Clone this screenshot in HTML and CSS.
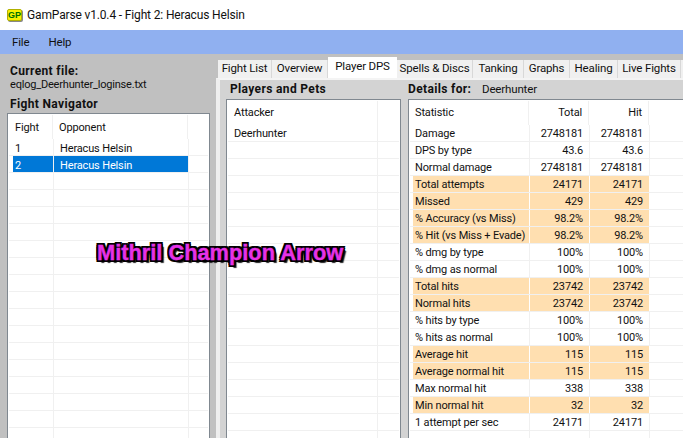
FILE: index.html
```html
<!DOCTYPE html>
<html lang="en">
<head>
<meta charset="utf-8">
<title>GamParse</title>
<link rel="stylesheet" href="styles.css">
</head>
<body>
<div class="titlebar">
  <span class="logo">GP</span>
  <span class="title">GamParse v1.0.4 - Fight 2: Heracus Helsin</span>
</div>
<nav class="menubar"><span>File</span><span>Help</span></nav>
<main class="main">
  <aside class="left">
    <div class="bold cf">Current file:</div>
    <div class="fname">eqlog_Deerhunter_loginse.txt</div>
    <div class="bold fn">Fight Navigator</div>
    <div class="list fights">
      <div class="head"><span class="c1">Fight</span><span class="c2">Opponent</span></div>
      <div class="row"><span class="c1">1</span><span class="c2">Heracus Helsin</span><span class="c3"></span></div>
      <div class="row sel"><span class="c1">2</span><span class="c2">Heracus Helsin</span><span class="c3"></span></div>
      <div class="row"><span class="c1"></span><span class="c2"></span><span class="c3"></span></div>
      <div class="row"><span class="c1"></span><span class="c2"></span><span class="c3"></span></div>
      <div class="row"><span class="c1"></span><span class="c2"></span><span class="c3"></span></div>
      <div class="row"><span class="c1"></span><span class="c2"></span><span class="c3"></span></div>
      <div class="row"><span class="c1"></span><span class="c2"></span><span class="c3"></span></div>
      <div class="row"><span class="c1"></span><span class="c2"></span><span class="c3"></span></div>
      <div class="row"><span class="c1"></span><span class="c2"></span><span class="c3"></span></div>
      <div class="row"><span class="c1"></span><span class="c2"></span><span class="c3"></span></div>
      <div class="row"><span class="c1"></span><span class="c2"></span><span class="c3"></span></div>
      <div class="row"><span class="c1"></span><span class="c2"></span><span class="c3"></span></div>
      <div class="row"><span class="c1"></span><span class="c2"></span><span class="c3"></span></div>
      <div class="row"><span class="c1"></span><span class="c2"></span><span class="c3"></span></div>
      <div class="row"><span class="c1"></span><span class="c2"></span><span class="c3"></span></div>
      <div class="row"><span class="c1"></span><span class="c2"></span><span class="c3"></span></div>
      <div class="row"><span class="c1"></span><span class="c2"></span><span class="c3"></span></div>
      <div class="row"><span class="c1"></span><span class="c2"></span><span class="c3"></span></div>
    </div>
  </aside>
  <section class="right">
    <div class="tabs">
      <span class="tab t1">Fight List</span>
      <span class="tab t2">Overview</span>
      <span class="tab active">Player DPS</span>
      <span class="tab t4">Spells &amp; Discs</span>
      <span class="tab t5">Tanking</span>
      <span class="tab t6">Graphs</span>
      <span class="tab t7">Healing</span>
      <span class="tab t8">Live Fights</span>
      <span class="tab t9"></span>
    </div>
    <div class="panel">
      <div class="players">
        <div class="bold ptitle">Players and Pets</div>
        <div class="list plist">
          <div class="head"><span class="p1">Attacker</span></div>
          <div class="row"><span class="p1">Deerhunter</span><span class="p2"></span></div>
          <div class="row"><span class="p1"></span><span class="p2"></span></div>
          <div class="row"><span class="p1"></span><span class="p2"></span></div>
          <div class="row"><span class="p1"></span><span class="p2"></span></div>
          <div class="row"><span class="p1"></span><span class="p2"></span></div>
          <div class="row"><span class="p1"></span><span class="p2"></span></div>
          <div class="row"><span class="p1"></span><span class="p2"></span></div>
          <div class="row"><span class="p1"></span><span class="p2"></span></div>
          <div class="row"><span class="p1"></span><span class="p2"></span></div>
          <div class="row"><span class="p1"></span><span class="p2"></span></div>
          <div class="row"><span class="p1"></span><span class="p2"></span></div>
          <div class="row"><span class="p1"></span><span class="p2"></span></div>
          <div class="row"><span class="p1"></span><span class="p2"></span></div>
          <div class="row"><span class="p1"></span><span class="p2"></span></div>
          <div class="row"><span class="p1"></span><span class="p2"></span></div>
          <div class="row"><span class="p1"></span><span class="p2"></span></div>
          <div class="row"><span class="p1"></span><span class="p2"></span></div>
          <div class="row"><span class="p1"></span><span class="p2"></span></div>
          <div class="row"><span class="p1"></span><span class="p2"></span></div>
        </div>
      </div>
      <div class="details">
        <div class="dtitle"><span class="bold dlabel">Details for:</span><span>Deerhunter</span></div>
        <div class="list stats">
          <div class="head"><span class="s1">Statistic</span><span class="s2">Total</span><span class="s2">Hit</span></div>
          <div class="row"><span class="s1">Damage</span><span class="s2">2748181</span><span class="s2">2748181</span></div>
          <div class="row"><span class="s1">DPS by type</span><span class="s2">43.6</span><span class="s2">43.6</span></div>
          <div class="row"><span class="s1">Normal damage</span><span class="s2">2748181</span><span class="s2">2748181</span></div>
          <div class="row hl"><span class="s1">Total attempts</span><span class="s2">24171</span><span class="s2">24171</span></div>
          <div class="row hl"><span class="s1">Missed</span><span class="s2">429</span><span class="s2">429</span></div>
          <div class="row hl"><span class="s1">% Accuracy (vs Miss)</span><span class="s2">98.2%</span><span class="s2">98.2%</span></div>
          <div class="row hl"><span class="s1">% Hit (vs Miss + Evade)</span><span class="s2">98.2%</span><span class="s2">98.2%</span></div>
          <div class="row"><span class="s1">% dmg by type</span><span class="s2">100%</span><span class="s2">100%</span></div>
          <div class="row"><span class="s1">% dmg as normal</span><span class="s2">100%</span><span class="s2">100%</span></div>
          <div class="row hl"><span class="s1">Total hits</span><span class="s2">23742</span><span class="s2">23742</span></div>
          <div class="row hl"><span class="s1">Normal hits</span><span class="s2">23742</span><span class="s2">23742</span></div>
          <div class="row"><span class="s1">% hits by type</span><span class="s2">100%</span><span class="s2">100%</span></div>
          <div class="row"><span class="s1">% hits as normal</span><span class="s2">100%</span><span class="s2">100%</span></div>
          <div class="row hl"><span class="s1">Average hit</span><span class="s2">115</span><span class="s2">115</span></div>
          <div class="row hl"><span class="s1">Average normal hit</span><span class="s2">115</span><span class="s2">115</span></div>
          <div class="row"><span class="s1">Max normal hit</span><span class="s2">338</span><span class="s2">338</span></div>
          <div class="row hl"><span class="s1">Min normal hit</span><span class="s2">32</span><span class="s2">32</span></div>
          <div class="row"><span class="s1">1 attempt per sec</span><span class="s2">24171</span><span class="s2">24171</span></div>
          <div class="row"><span class="s1"></span><span class="s2"></span><span class="s2"></span></div>
        </div>
      </div>
    </div>
  </section>
</main>
<div class="overlay">Mithril Champion Arrow</div>
</body>
</html>
```
FILE: styles.css
```css
* { box-sizing: border-box; }
html, body { margin: 0; height: 438px; overflow: hidden; }
body {
  position: relative;
  display: flex;
  flex-direction: column;
  width: 683px;
  background: #fff;
  color: #111;
  font: 11.5px/17px Roboto, sans-serif;
  letter-spacing: -0.15px;
}
.bold { font-weight: 700; font-size: 12px; letter-spacing: 0.35px; }

.titlebar { height: 30px; display: flex; align-items: center; padding-left: 7px; background: #fff; flex: none; }
.logo {
  width: 15px; height: 12px; margin-right: 5px;
  background: #f8f000; border: 1px solid #b0b000; border-radius: 2px;
  box-shadow: 1px 1px 0 #888;
  color: #007000; font: 700 9px/10px "Liberation Sans", sans-serif; text-align: center;
  letter-spacing: 0;
}
.title { font-size: 12px; letter-spacing: -0.15px; }

.menubar { height: 24px; flex: none; background: #90b0f0; display: flex; align-items: center; gap: 19px; padding-left: 12px; }

.main { flex: 1; display: flex; min-height: 0; background: #c0c0c0; }

.left { width: 216px; flex: none; display: flex; flex-direction: column; padding: 9px 6px 0 7px; }
.cf { padding-left: 3px; }
.fname { padding-left: 3px; margin-top: -4px; font-size: 11px; letter-spacing: -0.2px; }
.fn { padding-left: 3px; margin-top: 3px; }

.list { background: #fff; border: 1px solid #808890; border-bottom: 0; overflow: hidden; flex: 1; min-height: 0; font-size: 11px; letter-spacing: -0.15px; }
.head { height: 25px; display: flex; align-items: center; }
.row { height: 17px; display: flex; border-bottom: 1px solid #f0f0f0; line-height: 17px; }
.row span { display: block; height: 16px; border-right: 1px solid #f0f0f0; white-space: nowrap; }

.fights { padding: 0 1px; }
.fights .row { line-height: 19px; }
.fights .c1 { width: 41px; padding-left: 2px; margin-left: 4px; }
.fights .c2 { width: 135px; padding-left: 6px; }
.fights .c3 { flex: 1; border-right: 0; }
.fights .head .c1 { height: 24px; line-height: 26px; width: 40px; border-right: 1px solid #f0f0f0; }
.fights .head .c2 { height: 24px; line-height: 26px; border-right: 1px solid #f0f0f0; }
.sel .c1, .sel .c2 { background: #0078d7; color: #fff; }

.right { flex: 1; min-width: 0; display: flex; flex-direction: column; padding-top: 3px; }
.tabs { height: 21px; flex: none; display: flex; align-items: flex-end; padding-left: 2px; }
.tab {
  height: 18px; line-height: 17px; background: #f0f0f0;
  border-right: 1px solid #d8d8d8;
  text-align: center; flex: none;
}
.t1 { width: 54px; } .t2 { width: 56px; } .t4 { width: 76px; } .t5 { width: 51px; }
.t6 { width: 46px; } .t7 { width: 48px; } .t8 { width: 63px; } .t9 { width: 5px; }
.tab.active { height: 21px; width: 69px; background: #fff; line-height: 19px; border-right: 0; }

.panel {
  flex: 1; min-height: 0; display: flex; background: #d3d3d3;
  border-left: 4px solid #eee; border-top: 2px solid #f4f4f4;
  padding-left: 6px;
}
.players { width: 175px; flex: none; display: flex; flex-direction: column; }
.ptitle { height: 19px; padding-left: 4px; line-height: 18px; }
.plist { padding: 0 1px; }
.plist .p1 { width: 150px; padding-left: 6px; }
.plist .p2 { flex: 1; border-right: 0; }
.plist .head .p1 { height: 24px; line-height: 24px; border-right: 1px solid #f0f0f0; }

.details { flex: 1; min-width: 0; margin-left: 7px; display: flex; flex-direction: column; }
.dtitle { height: 19px; display: flex; line-height: 18px; }
.dlabel { width: 74px; }
.stats { padding: 0 0 0 1px; border-right: 0; }
.stats .s1 { width: 117px; margin-left: 3px; padding-left: 2px; }
.stats .s2 { width: 60px; padding-right: 6px; text-align: right; }
.stats .head .s1, .stats .head .s2 { height: 24px; line-height: 24px; border-right: 1px solid #f0f0f0; }
.stats .head .s1 { width: 116px; }
.hl .s1, .hl .s2 { background: #ffdfb0; border-right-color: #fff; }

.overlay {
  position: absolute; left: 97px; top: 241px;
  font: 700 21.8px/24px "Liberation Sans", sans-serif;
  letter-spacing: 0;
  color: #e632e6;
  -webkit-text-stroke: 0.4px #e632e6;
  text-shadow: 2px 0 0 #000, -2px 0 0 #000, 0 2px 0 #000, 0 -2px 0 #000,
    2px 2px 0 #000, -2px 2px 0 #000, 2px -2px 0 #000, -2px -2px 0 #000,
    3px 3px 1px #222;
  white-space: nowrap;
}
```
